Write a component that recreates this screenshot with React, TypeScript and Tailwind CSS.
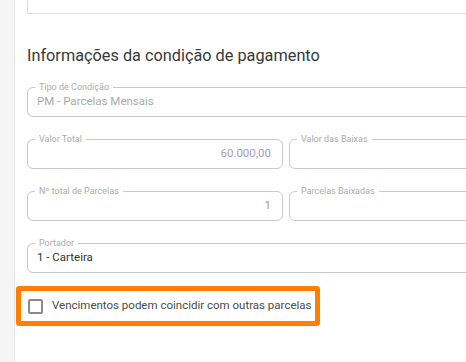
import type { ReactNode } from "react";

type FieldProps = {
  label: string;
  value?: string;
  align?: "left" | "right";
  tone?: "muted" | "number" | "normal";
  className?: string;
};

const toneClass = {
  muted: "text-[#a9a9a9]",
  number: "text-[#a19db3]",
  normal: "text-[#333333]",
};

function Field({ label, value, align = "left", tone = "muted", className = "" }: FieldProps) {
  return (
    <div
      className={`relative flex h-[30px] items-center rounded-[6px] border border-[#c9c9c9] px-[9px] ${
        align === "right" ? "justify-end pr-[11px]" : ""
      } ${className}`}
    >
      <span className="absolute -top-[7px] left-[7px] bg-white px-[4px] text-[9px] leading-[12px] text-[#ababab]">
        {label}
      </span>
      {value ? <span className={`text-[11.5px] ${toneClass[tone]}`}>{value}</span> : null}
    </div>
  );
}

function Row({ children }: { children: ReactNode }) {
  return <div className="grid grid-cols-2 gap-[6px]">{children}</div>;
}

export default function App() {
  return (
    <div className="flex h-[362px] w-[466px] overflow-hidden bg-white font-['Roboto',sans-serif]">
      <div className="w-[15px] shrink-0 border-r border-[#e3e3e3] bg-[#f5f5f5]" />
      <div className="w-[530px] shrink-0 pl-[12px]">
        <div className="h-[14px] border-x border-b border-[#dddddd]" />

        <h2 className="mt-[32px] text-[16.3px] leading-[20px] text-[#383838]">
          Informações da condição de pagamento
        </h2>

        <div className="mt-[21px] flex flex-col gap-[22px]">
          <Field label="Tipo de Condição" value="PM - Parcelas Mensais" />
          <Row>
            <Field label="Valor Total" value="60.000,00" align="right" tone="number" />
            <Field label="Valor das Baixas" />
          </Row>
          <Row>
            <Field label="Nº total de Parcelas" value="1" align="right" tone="number" />
            <Field label="Parcelas Baixadas" />
          </Row>
          <Field label="Portador" value="1 - Carteira" tone="normal" />
        </div>

        <label className="-ml-[11px] mt-[13px] flex h-[40px] w-[304px] items-center gap-[9px] rounded-[3px] border-[5px] border-[#ff8000] pl-[7px]">
          <span className="h-[15px] w-[15px] shrink-0 rounded-[2px] border-2 border-[#8a8a8a]" />
          <span className="whitespace-nowrap text-[11.5px] text-[#4a4a4a]">
            Vencimentos podem coincidir com outras parcelas
          </span>
        </label>
      </div>
    </div>
  );
}
